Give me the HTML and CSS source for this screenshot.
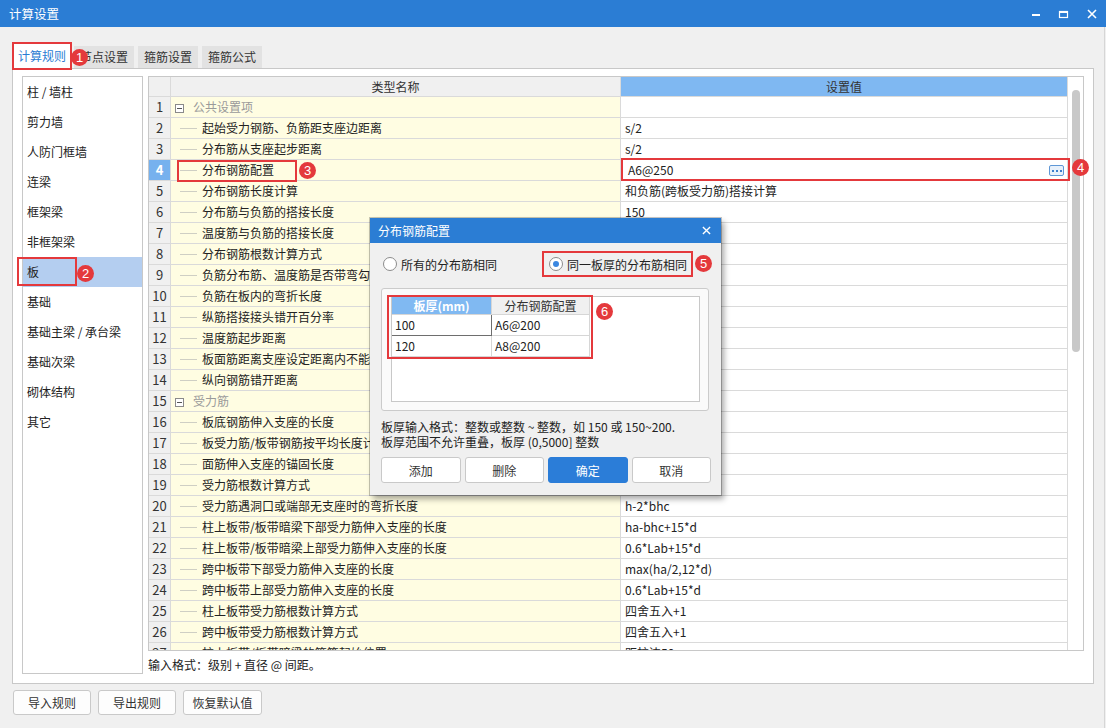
FILE: index.html
```html
<!DOCTYPE html>
<html lang="zh-CN">
<head>
<meta charset="utf-8">
<title>计算设置</title>
<link rel="stylesheet" href="styles.css">
</head>
<body>
<div class="window">
  <header class="titlebar">
    <span class="title">计算设置</span>
    <div class="controls">
      <svg viewBox="0 0 28 27"><line x1="10" y1="15" x2="18" y2="15" stroke="#fff" stroke-width="2"/></svg>
      <svg viewBox="0 0 28 27"><rect x="9.5" y="11.5" width="8" height="6" fill="none" stroke="#fff" stroke-width="1.2"/><line x1="9" y1="12" x2="18" y2="12" stroke="#fff" stroke-width="2"/></svg>
      <svg viewBox="0 0 28 27"><path d="M10 10 L18 18 M18 10 L10 18" stroke="#fff" stroke-width="1.6"/></svg>
    </div>
  </header>

  <div class="content">
    <nav class="tabs">
      <div class="tab active">计算规则<span class="badge b1">1</span></div>
      <div class="tab">节点设置</div>
      <div class="tab">箍筋设置</div>
      <div class="tab">箍筋公式</div>
    </nav>

    <section class="panel">
      <ul class="cat-list">
        <li>柱 / 墙柱</li>
        <li>剪力墙</li>
        <li>人防门框墙</li>
        <li>连梁</li>
        <li>框架梁</li>
        <li>非框架梁</li>
        <li class="selected">板<span class="redbox rb2"></span><span class="badge b2">2</span></li>
        <li>基础</li>
        <li>基础主梁 / 承台梁</li>
        <li>基础次梁</li>
        <li>砌体结构</li>
        <li>其它</li>
      </ul>

      <div class="main-col">
        <div class="grid-box">
          <div class="grid">
            <div class="row hd"><div class="num"></div><div class="name">类型名称</div><div class="val">设置值</div></div>
            <div class="row"><div class="num">1</div><div class="name group"><span class="toggle"></span>公共设置项</div><div class="val"></div></div>
            <div class="row"><div class="num">2</div><div class="name">起始受力钢筋、负筋距支座边距离</div><div class="val">s/2</div></div>
            <div class="row"><div class="num">3</div><div class="name">分布筋从支座起步距离</div><div class="val">s/2</div></div>
            <div class="row cur"><div class="num">4</div><div class="name ov">分布钢筋配置<span class="redbox rb3"></span><span class="badge b3">3</span></div><div class="val ov edit">A6@250<span class="dots"><i></i><i></i><i></i></span><span class="redbox rb4"></span><span class="badge b4">4</span></div></div>
            <div class="row"><div class="num">5</div><div class="name">分布钢筋长度计算</div><div class="val">和负筋(跨板受力筋)搭接计算</div></div>
            <div class="row"><div class="num">6</div><div class="name">分布筋与负筋的搭接长度</div><div class="val">150</div></div>
            <div class="row"><div class="num">7</div><div class="name">温度筋与负筋的搭接长度</div><div class="val">ll</div></div>
            <div class="row"><div class="num">8</div><div class="name">分布钢筋根数计算方式</div><div class="val">向下取整+1</div></div>
            <div class="row"><div class="num">9</div><div class="name">负筋分布筋、温度筋是否带弯勾</div><div class="val">否</div></div>
            <div class="row"><div class="num">10</div><div class="name">负筋在板内的弯折长度</div><div class="val">h-2*bhc</div></div>
            <div class="row"><div class="num">11</div><div class="name">纵筋搭接接头错开百分率</div><div class="val">50%</div></div>
            <div class="row"><div class="num">12</div><div class="name">温度筋起步距离</div><div class="val">s</div></div>
            <div class="row"><div class="num">13</div><div class="name">板面筋距离支座设定距离内不能有接头</div><div class="val">0</div></div>
            <div class="row"><div class="num">14</div><div class="name">纵向钢筋错开距离</div><div class="val">0</div></div>
            <div class="row"><div class="num">15</div><div class="name group"><span class="toggle"></span>受力筋</div><div class="val"></div></div>
            <div class="row"><div class="num">16</div><div class="name">板底钢筋伸入支座的长度</div><div class="val">max(ha/2,5*d)</div></div>
            <div class="row"><div class="num">17</div><div class="name">板受力筋/板带钢筋按平均长度计算</div><div class="val">否</div></div>
            <div class="row"><div class="num">18</div><div class="name">面筋伸入支座的锚固长度</div><div class="val">能直锚就直锚</div></div>
            <div class="row"><div class="num">19</div><div class="name">受力筋根数计算方式</div><div class="val">向上取整+1</div></div>
            <div class="row"><div class="num">20</div><div class="name">受力筋遇洞口或端部无支座时的弯折长度</div><div class="val">h-2*bhc</div></div>
            <div class="row"><div class="num">21</div><div class="name">柱上板带/板带暗梁下部受力筋伸入支座的长度</div><div class="val">ha-bhc+15*d</div></div>
            <div class="row"><div class="num">22</div><div class="name">柱上板带/板带暗梁上部受力筋伸入支座的长度</div><div class="val">0.6*Lab+15*d</div></div>
            <div class="row"><div class="num">23</div><div class="name">跨中板带下部受力筋伸入支座的长度</div><div class="val">max(ha/2,12*d)</div></div>
            <div class="row"><div class="num">24</div><div class="name">跨中板带上部受力筋伸入支座的长度</div><div class="val">0.6*Lab+15*d</div></div>
            <div class="row"><div class="num">25</div><div class="name">柱上板带受力筋根数计算方式</div><div class="val">四舍五入+1</div></div>
            <div class="row"><div class="num">26</div><div class="name">跨中板带受力筋根数计算方式</div><div class="val">四舍五入+1</div></div>
            <div class="row partial"><div class="num">27</div><div class="name">柱上板带/板带暗梁的箍筋起始位置</div><div class="val">距柱边50mm</div></div>
          </div>
          <div class="vscroll"><div class="thumb"></div></div>
        </div>
        <p class="hint">输入格式：级别 + 直径 @ 间距。</p>
      </div>
    </section>

    <footer class="actions">
      <button class="btn">导入规则</button>
      <button class="btn">导出规则</button>
      <button class="btn wide">恢复默认值</button>
    </footer>
  </div>

  <div class="dialog">
    <div class="dlg-title">
      <span>分布钢筋配置</span>
      <svg class="dlg-close" viewBox="0 0 10 10"><path d="M1 1 L9 9 M9 1 L1 9" stroke="#fff" stroke-width="1.5"/></svg>
    </div>
    <div class="dlg-body">
      <div class="radio-row">
        <label class="radio"><span class="circle"></span>所有的分布筋相同</label>
        <label class="radio checked"><span class="circle"><i></i></span>同一板厚的分布筋相同<span class="badge b5">5</span></label>
      </div>
      <div class="groupbox">
        <div class="inner">
          <div class="dlg-table">
            <div class="dt-row dt-head"><div class="c1">板厚(mm)</div><div class="c2">分布钢筋配置</div></div>
            <div class="dt-row"><div class="c1 focus">100</div><div class="c2">A6@200</div></div>
            <div class="dt-row"><div class="c1">120</div><div class="c2">A8@200</div></div>
            <span class="redbox rb6"></span>
            <span class="badge b6">6</span>
          </div>
        </div>
      </div>
      <p class="dlg-hint">板厚输入格式：整数或整数 ~ 整数，如 150 或 150~200.<br>板厚范围不允许重叠，板厚 (0,5000] 整数</p>
      <div class="dlg-buttons">
        <button class="btn">添加</button>
        <button class="btn">删除</button>
        <button class="btn primary">确定</button>
        <button class="btn">取消</button>
      </div>
    </div>
  </div>
</div>
</body>
</html>
```

FILE: styles.css
```css
* { box-sizing: border-box; }

body {
  margin: 0;
  width: 1106px;
  height: 728px;
  overflow: hidden;
  background: #f0f0f0;
  font-family: "Noto Sans CJK SC", "Microsoft YaHei", sans-serif;
  font-size: 12px;
  color: #222;
}

.window { position: relative; width: 1106px; height: 728px; }

/* title bar */
.titlebar {
  height: 27px;
  background: #2b7dd4;
  color: #fff;
  display: flex;
  align-items: center;
  justify-content: space-between;
}
.title { padding-left: 9px; font-size: 12.5px; }
.controls { display: flex; height: 27px; }
.controls svg { width: 28px; height: 27px; display: block; }

.content {
  width: 1105px;
  height: 701px;
  border-right: 1px solid #d6d6d6;
  padding: 17px 0 0 12px;
}

/* tabs */
.tabs {
  display: flex;
  align-items: flex-end;
  gap: 4px;
  height: 24px;
  padding-left: 2px;
  position: relative;
  z-index: 2;
}
.tab {
  height: 22px;
  line-height: 22px;
  padding: 0 6px;
  background: #e2e2e2;
  color: #333;
  white-space: nowrap;
}
.tab.active {
  position: relative;
  height: 24px;
  line-height: 24px;
  padding: 0 4px;
  background: #fff;
  color: #2b7cd3;
  outline: 2px solid #e4393c;
}

/* badges and annotation boxes */
.badge {
  position: absolute;
  width: 17px;
  height: 17px;
  border-radius: 50%;
  background: #e4393c;
  color: #fff;
  font: 13px/17px "Liberation Sans", Arial, sans-serif;
  text-align: center;
  z-index: 5;
}
.redbox {
  position: absolute;
  border: 2px solid #e4393c;
  z-index: 4;
}
.b1 { left: 57px; top: 5px; }
.b2 { left: 54px; top: 8px; }
.rb2 { left: -6px; top: 0; width: 60px; height: 29px; }
.b3 { left: 128px; top: 2px; }
.rb3 { left: 6px; top: 0; width: 120px; height: 22px; }
.rb4 { left: 0; top: -2px; width: 449px; height: 23px; }
.b4 { left: 451px; top: -1px; }
.b5 { left: 151px; top: 2px; }
.rb6 { left: -5px; top: -2px; width: 206px; height: 64px; }
.b6 { left: 204px; top: 6px; }

/* main panel */
.panel {
  width: 1082px;
  height: 616px;
  border: 1px solid #c8c8c8;
  background: #fff;
  padding: 7px 9px 9px 9px;
  display: flex;
  gap: 5px;
}

.cat-list {
  width: 121px;
  height: 598px;
  margin: 0;
  padding: 0;
  list-style: none;
  border: 1px solid #c8c8c8;
}
.cat-list li {
  position: relative;
  height: 30px;
  line-height: 30px;
  padding-left: 4px;
  white-space: nowrap;
}
.cat-list li.selected { background: #b4cef0; }

.main-col { width: 936px; display: flex; flex-direction: column; }

.grid-box {
  height: 575px;
  border: 1px solid #c8c8c8;
  display: flex;
}
.grid { width: 919px; }

.row {
  display: grid;
  grid-template-columns: 22px 450px 447px;
  height: 21px;
}
.row > div {
  border-right: 1px solid #dadada;
  border-bottom: 1px solid #dadada;
  line-height: 20px;
  white-space: nowrap;
  overflow: hidden;
}
.row > div.ov { overflow: visible; }

.num { background: #f0f0f0; text-align: center; font-size: 13px; color: #333; }
.name { position: relative; background: #fffde2; padding-left: 31px; }
.name::before {
  content: "";
  position: absolute;
  left: 9px;
  top: 10px;
  width: 17px;
  height: 1px;
  background: #cfcfc4;
}
.name.group { padding-left: 4px; color: #9a9a9a; }
.name.group::before { display: none; }
.toggle {
  display: inline-block;
  position: relative;
  width: 9px;
  height: 9px;
  border: 1px solid #8a8a8a;
  background: #fff;
  margin-right: 9px;
  vertical-align: -1px;
}
.toggle::after {
  content: "";
  position: absolute;
  left: 1px;
  top: 3px;
  width: 5px;
  height: 1px;
  background: #555;
}
.val { position: relative; background: #fff; padding-left: 4px; }
.val.edit { padding-left: 7px; }

.row.hd { height: 20px; }
.row.hd > div { line-height: 19px; }
.row.hd .name { background: #f0f0f0; padding-left: 0; text-align: center; color: #333; }
.row.hd .name::before { display: none; }
.row.hd .val { background: #7fb8f2; padding-left: 0; text-align: center; color: #333; }

.row.cur .num { background: #76b1ee; color: #fff; font-weight: bold; }

.row.partial { height: 7px; }
.row.partial > div { border-bottom: 0; line-height: 20px; }

.dots {
  position: absolute;
  right: 3px;
  top: 5px;
  width: 15px;
  height: 11px;
  border: 1px solid #5f97d6;
  border-radius: 2px;
  background: #e8f1fb;
  display: flex;
  align-items: center;
  justify-content: center;
  gap: 2px;
}
.dots i { width: 2px; height: 2px; background: #3d7fcc; }

.vscroll { width: 15px; position: relative; background: #fff; }
.thumb {
  position: absolute;
  left: 4px;
  top: 13px;
  width: 8px;
  height: 262px;
  border-radius: 4px;
  background: #c8c8c8;
}

.hint { margin: 5px 0 0; line-height: 18px; color: #222; }

/* footer buttons */
.actions { display: flex; gap: 7px; margin: 6px 0 0 1px; }
.btn {
  font-family: inherit;
  font-size: 12px;
  color: #333;
  background: #fdfdfd;
  border: 1px solid #c9c9c9;
  border-radius: 3px;
  padding: 0;
}
.actions .btn { width: 78px; height: 25px; }
.actions .btn.wide { width: 79px; }

/* dialog */
.dialog {
  position: absolute;
  left: 370px;
  top: 218px;
  width: 351px;
  height: 277px;
  background: #f0f0f0;
  box-shadow: 0 0 0 1px rgba(0, 0, 0, 0.22), 3px 4px 6px rgba(0, 0, 0, 0.35);
  z-index: 10;
}
.dlg-title {
  height: 25px;
  background: #2b7dd4;
  color: #fff;
  display: flex;
  align-items: center;
  justify-content: space-between;
  padding: 0 10px 0 8px;
}
.dlg-close { width: 9px; height: 9px; display: block; }

.dlg-body { padding: 8px 12px 13px 11px; }

.radio-row { display: flex; align-items: center; height: 26px; }
.radio {
  display: flex;
  align-items: center;
  gap: 4px;
  margin-left: 2px;
  white-space: nowrap;
  color: #222;
}
.circle {
  position: relative;
  width: 14px;
  height: 14px;
  border-radius: 50%;
  border: 1px solid #8c8c8c;
  background: #fff;
}
.circle i {
  position: absolute;
  left: 3px;
  top: 3px;
  width: 6px;
  height: 6px;
  border-radius: 50%;
  background: #3b87e0;
}
.radio.checked {
  position: relative;
  width: 151px;
  height: 26px;
  margin-left: auto;
  margin-right: 16px;
  border: 2px solid #e4393c;
  padding-left: 5px;
}

.groupbox {
  width: 328px;
  height: 123px;
  margin-top: 11px;
  border: 1px solid #cbcbcb;
  border-radius: 3px;
  background: #fafafa;
  padding: 7px 8px 8px 9px;
}
.groupbox .inner {
  height: 106px;
  border: 1px solid #c8c8c8;
  background: #fff;
}
.dlg-table { position: relative; width: 198px; }
.dt-row { display: grid; grid-template-columns: 100px 98px; height: 21px; }
.dt-row > div {
  border-right: 1px solid #d6d6d6;
  border-bottom: 1px solid #d6d6d6;
  line-height: 20px;
  padding-left: 3px;
  white-space: nowrap;
}
.dt-row.dt-head { height: 18px; }
.dt-head > div { line-height: 17px; padding-left: 0; text-align: center; }
.dt-head .c1 { background: #80b9f2; color: #fff; font-weight: bold; }
.dt-head .c2 { background: #f0f0f0; color: #333; }
.dt-row .c1.focus { border-right-color: #6e6e6e; border-bottom-color: #6e6e6e; }

.dlg-hint { margin: 8px 0 0; line-height: 15px; color: #222; white-space: nowrap; }

.dlg-buttons { display: flex; gap: 4px; margin-top: 8px; width: 330px; }
.dlg-buttons .btn { flex: 1; height: 26px; background: #fff; }
.dlg-buttons .btn.primary { background: #2b7dd8; border-color: #2b7dd8; color: #fff; }
```
